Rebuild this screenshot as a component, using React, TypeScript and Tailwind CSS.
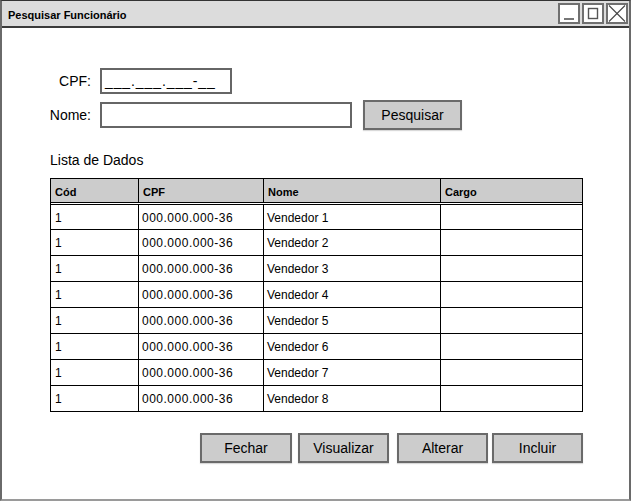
import React from "react";

const rows = [1, 2, 3, 4, 5, 6, 7, 8];

function TitleButton({ kind }: { kind: "min" | "max" | "close" }) {
  return (
    <div className="w-[22px] h-[21px] border-2 border-[#707070] bg-white flex items-center justify-center">
      <svg width="18" height="17" viewBox="0 0 18 17">
        {kind === "min" && <line x1="4" y1="14" x2="14" y2="14" stroke="#555" strokeWidth="1.6" />}
        {kind === "max" && <rect x="4.5" y="3.5" width="9" height="10" fill="none" stroke="#555" strokeWidth="1.4" />}
        {kind === "close" && (
          <g stroke="#444" strokeWidth="1.1">
            <line x1="1" y1="0.5" x2="17" y2="16.5" />
            <line x1="17" y1="0.5" x2="1" y2="16.5" />
          </g>
        )}
      </svg>
    </div>
  );
}

function Btn({ label, className }: { label: string; className?: string }) {
  return (
    <div
      className={
        "h-[30px] bg-[#cccccc] border-2 border-[#6a6a6a] flex items-center justify-center text-[14px] text-black shadow-[0_1px_1px_rgba(0,0,0,0.15)] " +
        (className ?? "")
      }
    >
      {label}
    </div>
  );
}

export default function App() {
  return (
    <div
      className="w-[631px] h-[501px] bg-white border-t border-x-2 border-b-2 border-t-[#333] border-x-[#6a6a6a] border-b-[#9a9a9a] flex flex-col overflow-hidden text-black"
      style={{ fontFamily: '"Liberation Sans", Arial, sans-serif' }}
    >
      {/* Title bar */}
      <div className="h-[27px] bg-[#dcdcdc] border-b-2 border-b-[#3a3a3a] flex items-center justify-between pl-[6px] pr-[1px] shrink-0">
        <span className="text-[11px] font-bold pt-[3px]">Pesquisar Funcionário</span>
        <div className="flex gap-[2px] items-center">
          <TitleButton kind="min" />
          <TitleButton kind="max" />
          <TitleButton kind="close" />
        </div>
      </div>

      {/* Form */}
      <div className="mt-[40px] flex items-center h-[26px]">
        <div className="w-[89px] text-right text-[14px]">CPF:</div>
        <div className="ml-[9px] w-[132px] h-[26px] border-2 border-[#666] flex items-center pl-[3px] text-[14px] tracking-[0.9px]">
          ___.___.___-__
        </div>
      </div>
      <div className="mt-[6px] flex items-center h-[30px]">
        <div className="w-[89px] text-right text-[14px]">Nome:</div>
        <div className="ml-[9px] w-[252px] h-[26px] border-2 border-[#666]" />
        <Btn label="Pesquisar" className="ml-[11px] w-[99px]" />
      </div>

      <div className="mt-[20px] ml-[48px] h-[20px] leading-[20px] text-[14px]">Lista de Dados</div>

      {/* Table */}
      <div className="mt-[8px] ml-[48px] w-[533px] border border-black">
        <div className="grid grid-cols-[87px_125px_177px_142px] h-[24px] bg-[#cccccc] border-b border-black text-[11px] font-bold">
          <div className="pl-[4px] pt-[4px] flex items-center">Cód</div>
          <div className="pl-[4px] pt-[4px] flex items-center border-l border-black">CPF</div>
          <div className="pl-[4px] pt-[4px] flex items-center border-l border-black">Nome</div>
          <div className="pl-[4px] pt-[4px] flex items-center border-l border-black">Cargo</div>
        </div>
        {rows.map((n, i) => (
          <div
            key={n}
            className={
              "grid grid-cols-[87px_125px_177px_142px] border-t border-black text-[12px] " +
              (i === 0 ? "mt-[1px] h-[25px]" : "h-[26px]")
            }
          >
            <div className="pl-[4px] pt-[1px] flex items-center">1</div>
            <div className="pl-[3px] pt-[1px] flex items-center border-l border-black tracking-[0.5px]">000.000.000-36</div>
            <div className="pl-[3px] pt-[1px] flex items-center border-l border-black">Vendedor {n}</div>
            <div className="border-l border-black" />
          </div>
        ))}
      </div>

      {/* Bottom buttons */}
      <div className="mt-[21px] ml-[48px] w-[533px] flex justify-end">
        <Btn label="Fechar" className="w-[92px]" />
        <Btn label="Visualizar" className="ml-[6px] w-[91px]" />
        <Btn label="Alterar" className="ml-[8px] w-[91px]" />
        <Btn label="Incluir" className="ml-[4px] w-[91px]" />
      </div>
    </div>
  );
}
